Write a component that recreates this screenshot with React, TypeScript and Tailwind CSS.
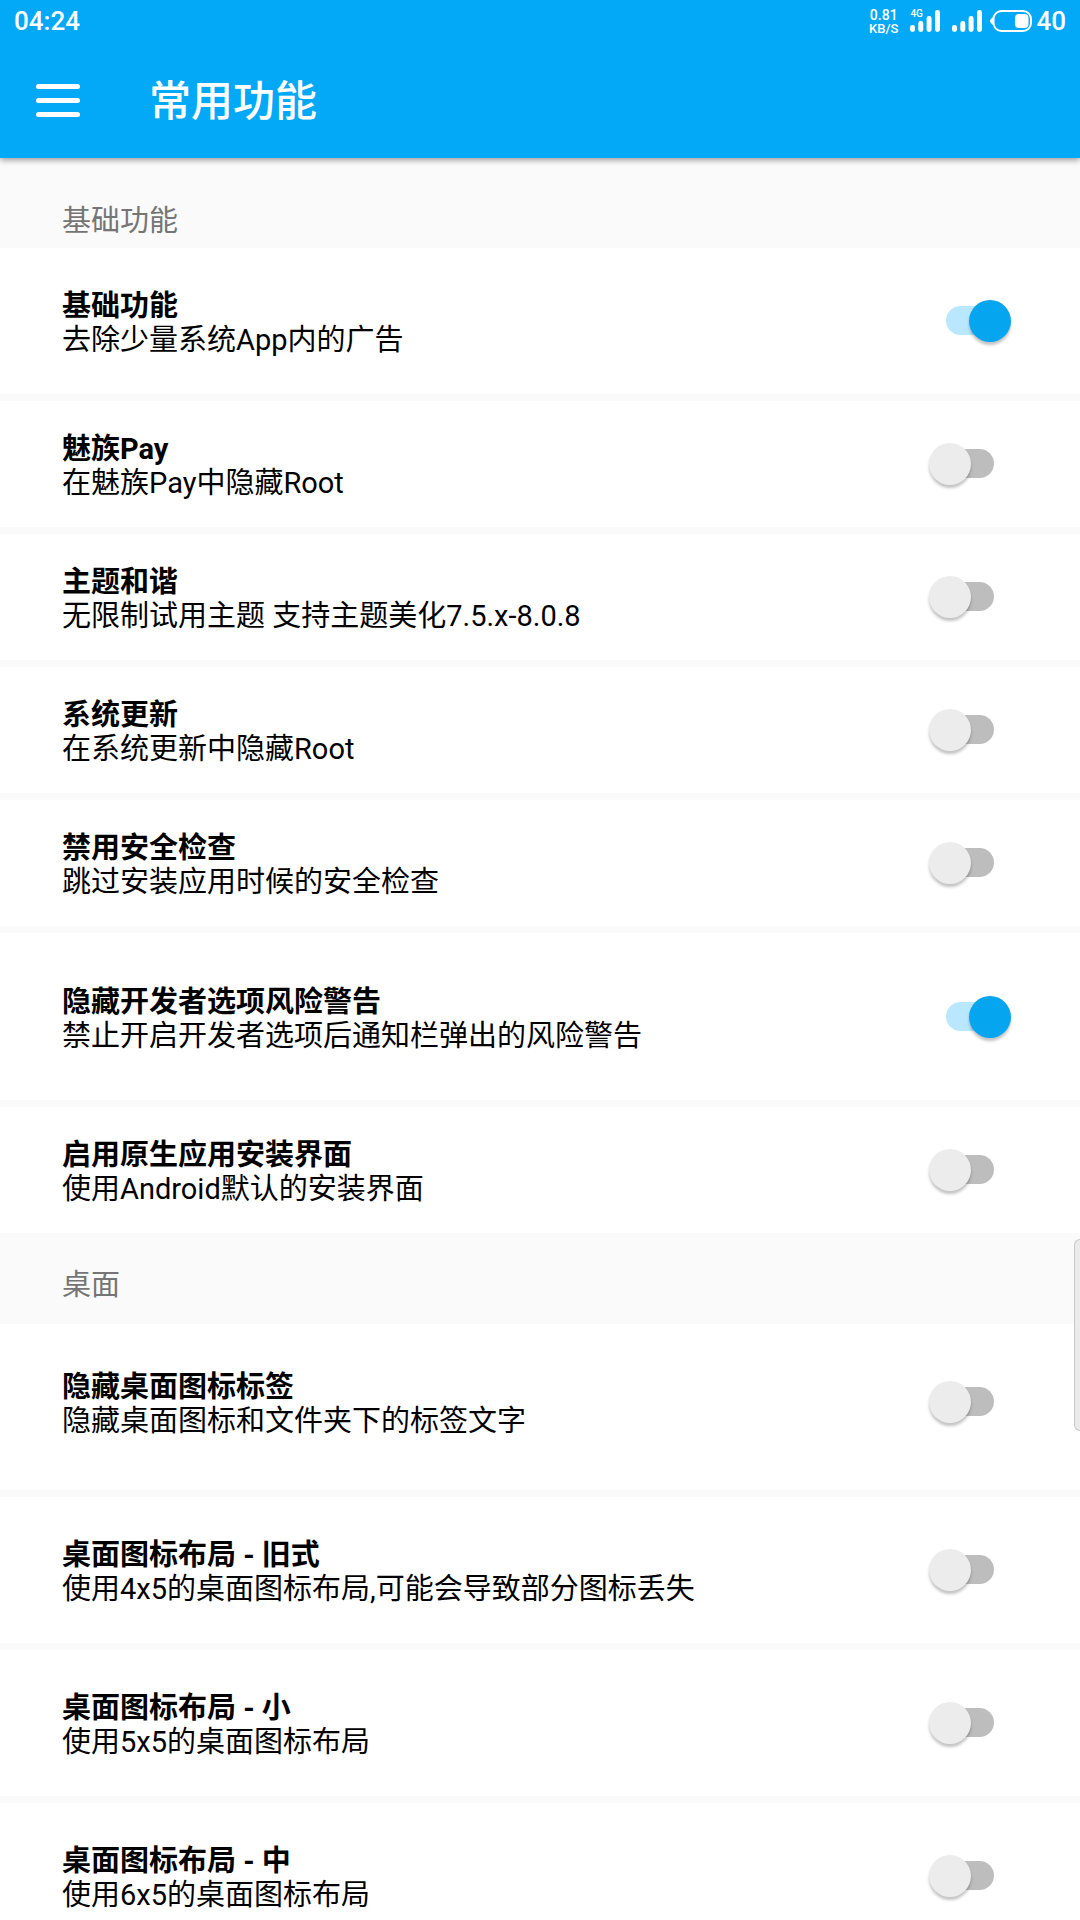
import { useState } from "react";
import clsx from "clsx";

interface SettingItem {
  id: string;
  title: string;
  summary: string;
  padding: string;
  enabled?: boolean;
}

interface SettingSection {
  name: string;
  headerClass: string;
  items: SettingItem[];
}

const sections: SettingSection[] = [
  {
    name: "基础功能",
    headerClass: "pt-[46px] pb-[9px]",
    items: [
      { id: "basic", title: "基础功能", summary: "去除少量系统App内的广告", padding: "py-[37px]", enabled: true },
      { id: "pay", title: "魅族Pay", summary: "在魅族Pay中隐藏Root", padding: "py-[27px]" },
      { id: "theme", title: "主题和谐", summary: "无限制试用主题 支持主题美化7.5.x-8.0.8", padding: "py-[27px]" },
      { id: "update", title: "系统更新", summary: "在系统更新中隐藏Root", padding: "py-[27px]" },
      { id: "security", title: "禁用安全检查", summary: "跳过安装应用时候的安全检查", padding: "py-[27px]" },
      { id: "devwarn", title: "隐藏开发者选项风险警告", summary: "禁止开启开发者选项后通知栏弹出的风险警告", padding: "pt-12 pb-[47px]", enabled: true },
      { id: "installer", title: "启用原生应用安装界面", summary: "使用Android默认的安装界面", padding: "py-[27px]" },
    ],
  },
  {
    name: "桌面",
    headerClass: "pt-[35px] pb-[21px]",
    items: [
      { id: "label", title: "隐藏桌面图标标签", summary: "隐藏桌面图标和文件夹下的标签文字", padding: "pt-[42px] pb-[52px]" },
      { id: "old", title: "桌面图标布局 - 旧式", summary: "使用4x5的桌面图标布局,可能会导致部分图标丢失", padding: "py-[37px]" },
      { id: "small", title: "桌面图标布局 - 小", summary: "使用5x5的桌面图标布局", padding: "py-[37px]" },
      { id: "medium", title: "桌面图标布局 - 中", summary: "使用6x5的桌面图标布局", padding: "py-[37px]" },
    ],
  },
];

function SignalIcon() {
  return (
    <svg width="30" height="22" viewBox="0 0 30 22" fill="currentColor" aria-hidden="true">
      <rect x="0" y="15" width="5" height="7" rx="2.4" />
      <rect x="8.3" y="11" width="5" height="11" rx="2.4" />
      <rect x="16.6" y="6" width="5" height="16" rx="2.4" />
      <rect x="25" y="0" width="5" height="22" rx="2.4" />
    </svg>
  );
}

function BatteryIcon() {
  return (
    <svg width="42" height="22" viewBox="0 0 42 22" aria-hidden="true">
      <path d="M3.5 7C1.5 8 0 9.5 0 11s1.5 3 3.5 4z" fill="currentColor" />
      <rect x="3.5" y="1" width="37.5" height="20" rx="8" fill="none" stroke="currentColor" strokeWidth="2" />
      <rect x="25" y="4" width="13.5" height="14" rx="4" fill="currentColor" />
    </svg>
  );
}

function StatusBar() {
  return (
    <div className="flex h-[42px] items-center justify-between px-[14px] font-medium">
      <span className="text-[26px] leading-8">04:24</span>
      <div className="flex items-center">
        <div className="mr-3 flex flex-col items-center">
          <span className="text-[14px] leading-[14px]">0.81</span>
          <span className="text-[13px] leading-[13px]">KB/S</span>
        </div>
        <div className="relative mr-3">
          <span className="absolute -top-px left-0 text-[10px] leading-[10px]">4G</span>
          <SignalIcon />
        </div>
        <SignalIcon />
        <div className="ml-2 mr-1">
          <BatteryIcon />
        </div>
        <span className="text-[26px] leading-8">40</span>
      </div>
    </div>
  );
}

function SettingRow({ item }: { item: SettingItem }) {
  const [checked, setChecked] = useState(!!item.enabled);

  return (
    <label
      htmlFor={item.id}
      className={clsx("flex items-center justify-between bg-white pl-[62px] pr-[69px]", item.padding)}
    >
      <span className="flex flex-col pt-1 text-[29px] leading-[34px] text-black">
        <span className="font-bold">{item.title}</span>
        <span>{item.summary}</span>
      </span>
      <input
        id={item.id}
        type="checkbox"
        role="switch"
        checked={checked}
        onChange={(e) => setChecked(e.target.checked)}
        className="relative h-[42px] w-[82px] shrink-0 appearance-none before:absolute before:left-[17px] before:top-[6px] before:h-[29px] before:w-12 before:rounded-full before:bg-[#bdbdbd] after:absolute after:left-0 after:top-0 after:size-[42px] after:rounded-full after:bg-[#ececec] after:shadow-[0_3px_3px_rgba(0,0,0,0.24)] checked:before:bg-[#b9e8fe] checked:after:left-10 checked:after:bg-[#05a5f0]"
      />
    </label>
  );
}

export default function App() {
  return (
    <div className="flex h-screen flex-col overflow-hidden bg-[#fafafa] font-['Roboto','Noto_Sans_CJK_SC',sans-serif]">
      <header className="z-10 shrink-0 bg-[#03a9f6] text-white shadow-[0_2px_6px_rgba(0,0,0,0.4)]">
        <StatusBar />
        <div className="flex items-start gap-[69px] pb-7 pl-9 pt-8">
          <button type="button" aria-label="菜单" className="flex h-[52px] w-11 flex-col justify-center gap-[9px]">
            <span className="h-[5px] w-full rounded-full bg-white" />
            <span className="h-[5px] w-full rounded-full bg-white" />
            <span className="h-[5px] w-full rounded-full bg-white" />
          </button>
          <h1 className="text-[42px] font-medium leading-[56px]">常用功能</h1>
        </div>
      </header>

      <main className="min-h-0 flex-1 overflow-y-auto [scrollbar-width:none]">
        {sections.map((section) => (
          <section key={section.name}>
            <h2 className={clsx("pl-[62px] text-[29px] leading-[35px] text-[#757575]", section.headerClass)}>
              {section.name}
            </h2>
            <div className="flex flex-col gap-[7px]">
              {section.items.map((item) => (
                <SettingRow key={item.id} item={item} />
              ))}
            </div>
          </section>
        ))}
      </main>

      {/* edge panel handle */}
      <div className="fixed right-0 top-[1239px] z-20 h-[192px] w-[6px] rounded-l-md border border-r-0 border-[#c8c8c8] bg-[#ebebeb]" />
    </div>
  );
}
